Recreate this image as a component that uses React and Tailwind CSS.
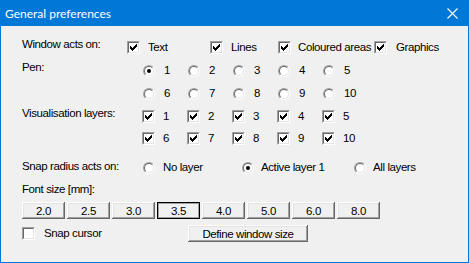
import React from "react";

function Check({ checked = true }) {
  return (
    <span className="block w-[13px] h-[13px] shrink-0 border border-t-[#a0a0a0] border-l-[#a0a0a0] border-b-white border-r-white">
      <span className="block w-full h-full border border-t-[#696969] border-l-[#696969] border-b-[#e3e3e3] border-r-[#e3e3e3] bg-white p-px">
        {checked && (
          <svg width="7" height="7" viewBox="0 0 7 7" shapeRendering="crispEdges" className="block">
            <rect x="0" y="2" width="1" height="3" fill="#000" />
            <rect x="1" y="3" width="1" height="3" fill="#000" />
            <rect x="2" y="4" width="1" height="3" fill="#000" />
            <rect x="3" y="3" width="1" height="3" fill="#000" />
            <rect x="4" y="2" width="1" height="3" fill="#000" />
            <rect x="5" y="1" width="1" height="3" fill="#000" />
            <rect x="6" y="0" width="1" height="3" fill="#000" />
          </svg>
        )}
      </span>
    </span>
  );
}

function Radio({ on = false }) {
  return (
    <span className="block w-[12px] h-[12px] shrink-0 rounded-full border border-t-[#a0a0a0] border-l-[#a0a0a0] border-b-white border-r-white">
      <span className="flex items-center justify-center w-full h-full rounded-full border border-t-[#696969] border-l-[#696969] border-b-[#e3e3e3] border-r-[#e3e3e3] bg-white">
        {on && <span className="block w-[4px] h-[4px] rounded-full bg-black" />}
      </span>
    </span>
  );
}

function CheckItem({ label, className = "", gap = "ml-[8px]", checked = true }) {
  return (
    <div className={"flex items-center h-[13px] " + className}>
      <Check checked={checked} />
      <span className={"leading-[13px] whitespace-nowrap " + gap}>{label}</span>
    </div>
  );
}

function RadioItem({ label, on = false, className = "", gap = "ml-[9px]" }) {
  return (
    <div className={"flex items-center h-[13px] " + className}>
      <Radio on={on} />
      <span className={"leading-[13px] whitespace-nowrap " + gap}>{label}</span>
    </div>
  );
}

const raised =
  "shadow-[inset_-1px_-1px_#696969,inset_1px_1px_#ffffff,inset_-2px_-2px_#a0a0a0,inset_2px_2px_#e3e3e3]";

function Btn({ children, pressed = false, className = "" }) {
  return (
    <div
      className={
        "flex items-center justify-center h-[17px] pt-px bg-[#f0f0f0] leading-[13px] " +
        (pressed
          ? "border border-black shadow-[inset_1px_1px_#a0a0a0,inset_-1px_-1px_#a0a0a0] "
          : raised + " ") +
        className
      }
    >
      {children}
    </div>
  );
}

export default function App() {
  const pens = ["1", "2", "3", "4", "5", "6", "7", "8", "9", "10"];
  const sizes = ["2.0", "2.5", "3.0", "3.5", "4.0", "5.0", "6.0", "8.0"];
  return (
    <div className="w-[469px] h-[263px] flex flex-col border border-[#0078d7] bg-[#f0f0f0] overflow-hidden">
      <div className="h-[25px] shrink-0 bg-[#0078d7] flex items-center justify-between pl-[4px] pr-[10px]">
        <span className="text-white text-[12px] leading-[16px] font-['Lato','Noto_Sans',sans-serif]">
          General preferences
        </span>
        <svg width="11" height="11" viewBox="0 0 11 11" className="block">
          <path d="M0.5 0.5 L10.5 10.5 M10.5 0.5 L0.5 10.5" stroke="#fff" strokeWidth="1.1" fill="none" />
        </svg>
      </div>

      <div className="flex flex-col pl-[21px] text-[11.5px] text-black font-['Liberation_Sans',Arial,sans-serif] tracking-[-0.4px]">
        {/* Window acts on */}
        <div className="flex mt-[12px]">
          <div className="w-[105px] leading-[13px]">Window acts on:</div>
          <div className="flex mt-[3px]">
            <CheckItem label="Text" className="w-[83px]" />
            <CheckItem label="Lines" className="w-[68px]" />
            <CheckItem label="Coloured areas" className="w-[96px]" gap="ml-[7px]" />
            <CheckItem label="Graphics" gap="ml-[9px]" />
          </div>
        </div>

        {/* Pen */}
        <div className="flex mt-[7px]">
          <div className="w-[121px] leading-[13px]">Pen:</div>
          <div className="grid grid-cols-[repeat(5,45px)] gap-y-[10px] mt-[3px]">
            {pens.map((p, i) => (
              <RadioItem key={p} label={p} on={i === 0} />
            ))}
          </div>
        </div>

        {/* Visualisation layers */}
        <div className="flex mt-[7px]">
          <div className="w-[120px] leading-[13px]">Visualisation layers:</div>
          <div className="grid grid-cols-[repeat(5,45px)] gap-y-[9px] mt-[3px]">
            {pens.map((p) => (
              <CheckItem key={p} label={p} />
            ))}
          </div>
        </div>

        {/* Snap radius */}
        <div className="flex mt-[15px]">
          <div className="w-[121px] leading-[13px]">Snap radius acts on:</div>
          <div className="flex mt-px">
            <RadioItem label="No layer" className="w-[99px]" gap="ml-[8px]" />
            <RadioItem label="Active layer 1" on className="w-[112px]" gap="ml-[7px]" />
            <RadioItem label="All layers" gap="ml-[7px]" />
          </div>
        </div>

        {/* Font size */}
        <div className="mt-[9px] leading-[13px]">Font size [mm]:</div>
        <div className="flex gap-[2px] mt-[6px]">
          {sizes.map((s) => (
            <Btn key={s} pressed={s === "3.5"} className="w-[43px]">
              {s}
            </Btn>
          ))}
        </div>

        <div className="flex items-center h-[17px] mt-[6px]">
          <CheckItem label="Snap cursor" checked={false} className="w-[166px]" gap="ml-[9px]" />
          <Btn className="w-[120px]">Define window size</Btn>
        </div>
      </div>
    </div>
  );
}
